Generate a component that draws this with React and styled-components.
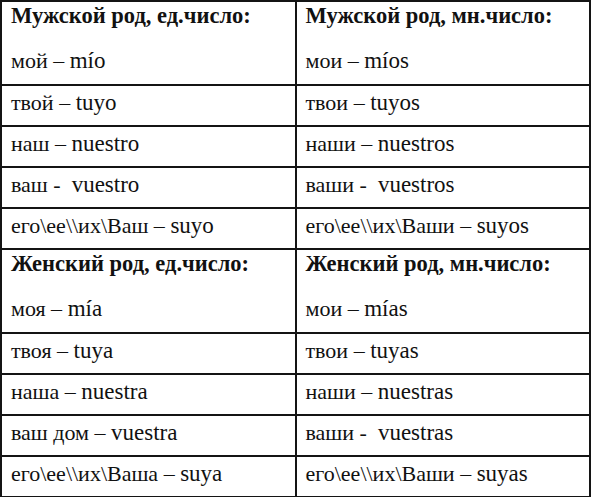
import styled, { createGlobalStyle } from "styled-components";

const GlobalStyle = createGlobalStyle`
  html, body {
    margin: 0;
    padding: 0;
    background: #ffffff;
  }
`;

const Table = styled.table`
  width: 591px;
  border-collapse: collapse;
  table-layout: fixed;
  color: #111;
`;

const Cell = styled.td`
  border: 2px solid #141414;
  padding: ${(p) => (p.$tall ? "0 0 0 9px" : "5px 0 0 9px")};
  height: ${(p) => (p.$tall ? "82px" : "34px")};
  vertical-align: top;
  font-family: "Liberation Serif", "Times New Roman", serif;
  font-size: 22px;
  white-space: pre;
  line-height: 1;
`;

const Title = styled.div`
  font-weight: bold;
  font-size: 22.5px;
  padding-top: 3px;
`;

const First = styled.div`
  padding-top: 21px;
`;

const Latin = styled.span`
  font-size: 23px;
  line-height: 1;
`;

const sections = [
  {
    titles: ["Мужской род, ед.число:", "Мужской род, мн.число:"],
    rows: [
      [["мой – ", "mío"], ["мои – ", "míos"]],
      [["твой – ", "tuyo"], ["твои – ", "tuyos"]],
      [["наш – ", "nuestro"], ["наши – ", "nuestros"]],
      [["ваш -  ", "vuestro"], ["ваши -  ", "vuestros"]],
      [["его\\ее\\\\их\\Ваш – ", "suyo"], ["его\\ее\\\\их\\Ваши – ", "suyos"]],
    ],
  },
  {
    titles: ["Женский род, ед.число:", "Женский род, мн.число:"],
    rows: [
      [["моя – ", "mía"], ["мои – ", "mías"]],
      [["твоя – ", "tuya"], ["твои – ", "tuyas"]],
      [["наша – ", "nuestra"], ["наши – ", "nuestras"]],
      [["ваш дом – ", "vuestra"], ["ваши -  ", "vuestras"]],
      [["его\\ее\\\\их\\Ваша – ", "suya"], ["его\\ее\\\\их\\Ваши – ", "suyas"]],
    ],
  },
];

const Entry = ({ pair }) => (
  <>
    {pair[0]}
    <Latin>{pair[1]}</Latin>
  </>
);

export default function App() {
  return (
    <>
      <GlobalStyle />
      <Table>
        <tbody>
          {sections.map((s, si) => [
            <tr key={si + "h"}>
              {s.titles.map((t, i) => (
                <Cell key={i} $tall>
                  <Title>{t}</Title>
                  <First>
                    <Entry pair={s.rows[0][i]} />
                  </First>
                </Cell>
              ))}
            </tr>,
            ...s.rows.slice(1).map((r, ri) => (
              <tr key={si + "-" + ri}>
                {r.map((c, i) => (
                  <Cell key={i}>
                    <Entry pair={c} />
                  </Cell>
                ))}
              </tr>
            )),
          ])}
        </tbody>
      </Table>
    </>
  );
}
